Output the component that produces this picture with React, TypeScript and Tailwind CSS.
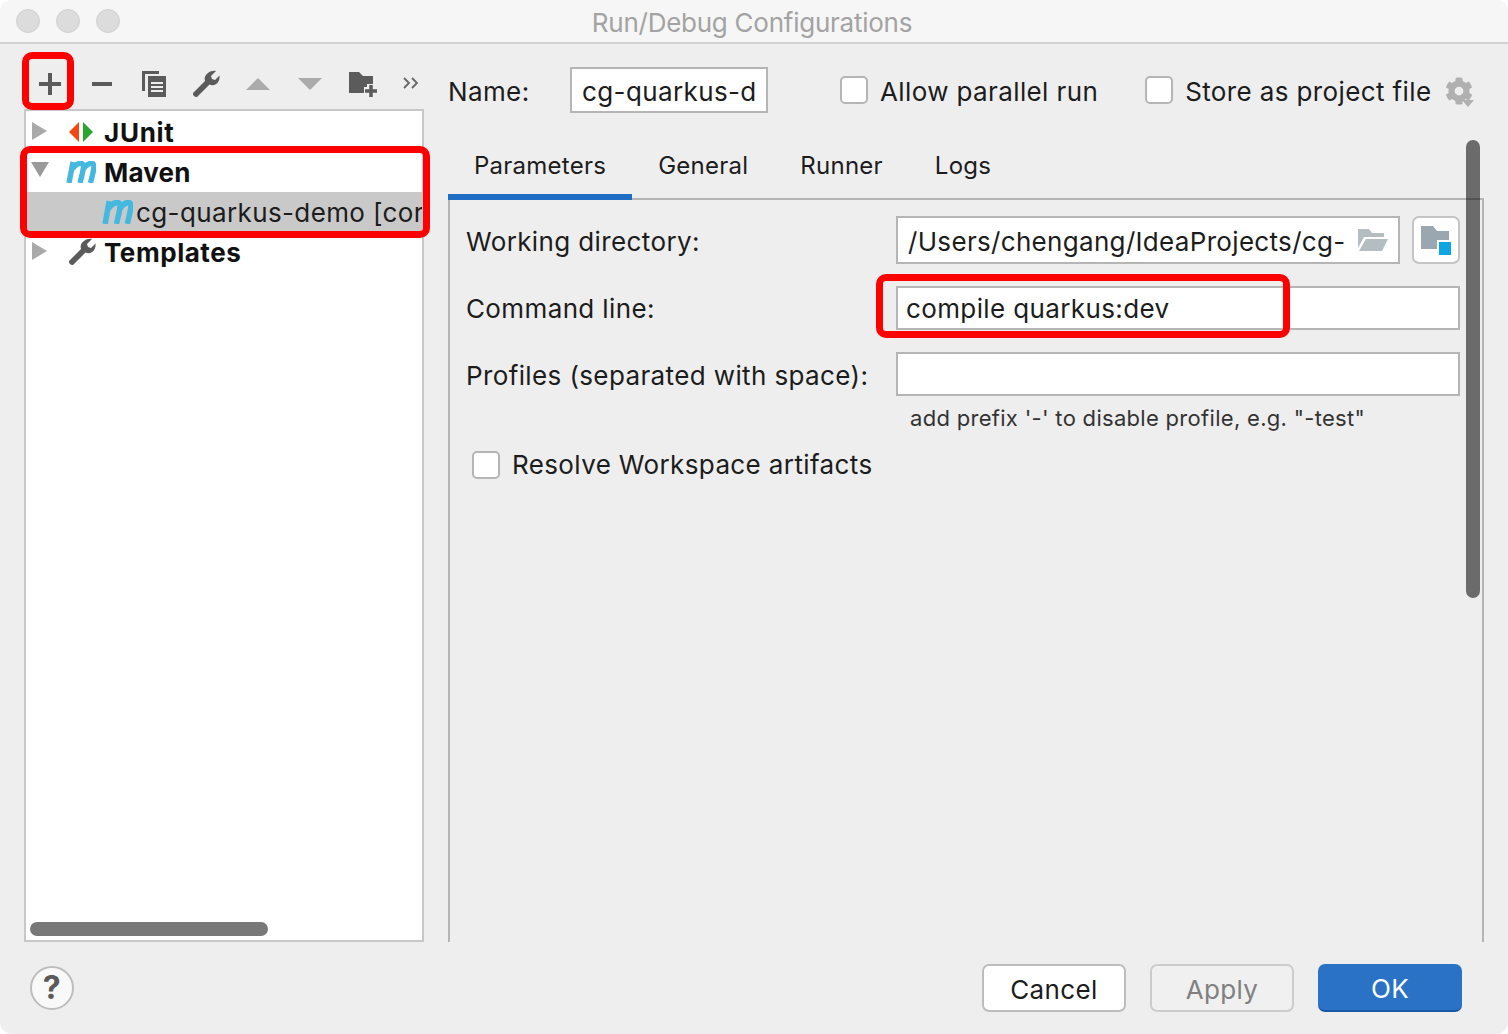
import React from 'react';
import { FaCog } from 'react-icons/fa';

const MavenIcon = ({ className }: { className: string }) => (
    <svg viewBox="0 0 30 22" preserveAspectRatio="none" className={className} fill="none" stroke="#45b8e0" strokeWidth="5.4">
        <path d="M3 22 L7 1" />
        <path d="M6.5 8 C9 3 15 1 17 3.5 C18 5 17.5 8 14 22" />
        <path d="M17.5 8 C20 3 26 1 27.5 3.5 C28.5 5 28 8 24.5 22" />
    </svg>
);

const WrenchIcon = () => (
    <svg viewBox="0 0 28 28" className="w-[28px] h-[28px]" fill="#5b5b5b">
        <path d="M24 1 L19 6 L20 9 L23 10 L27.5 5.5 C28 10 26 14 22 15 C20 15.5 18.5 15 17.5 14.5 L5.5 26.5 C4.5 27.5 3 27 2 26 C1 25 0.5 23.5 1.5 22.5 L13 11 C12 8 13 5 16 3 C18 1.5 21 0.5 24 1Z" />
    </svg>
);

const TreeRow = ({ children, selected }: { children: React.ReactNode; selected?: boolean }) => (
    <div className={`h-[40px] flex items-center whitespace-nowrap overflow-hidden ${selected ? 'bg-[#c9c9c9]' : ''}`}>
        {children}
    </div>
);

const RightArrow = () => (
    <svg viewBox="0 0 15 18" className="w-[15px] h-[18px] ml-[6px] mb-[2px]" fill="#a9a9a9">
        <polygon points="0,0 15,9 0,18" />
    </svg>
);

const Checkbox = ({ className }: { className?: string }) => (
    <div className={`w-[28px] h-[28px] rounded-[5px] bg-white border-2 border-[#b5b5b5] shrink-0 ${className ?? ''}`} />
);

const ToolSlot = ({ children }: { children: React.ReactNode }) => (
    <div className="w-[52px] shrink-0 flex justify-center">{children}</div>
);

const App = () => {
    return (
        <div className="relative w-[1508px] h-[1034px] bg-white overflow-hidden font-['Inter',sans-serif] text-[26px] tracking-[0.38px] text-[#1c1c1c]">
            <div className="h-full flex flex-col rounded-[12px] bg-[#eeeeee] overflow-hidden">
                {/* title bar */}
                <div className="h-[44px] shrink-0 grid grid-cols-[1fr_auto_1fr] items-center pl-[16px] pr-[20px] bg-[#f6f6f6] border-b-2 border-[#d2d2d2]">
                    <div className="flex gap-[16px]">
                        <div className="w-[24px] h-[24px] rounded-full bg-[#dcdcdc] border border-[#d0d0d0]" />
                        <div className="w-[24px] h-[24px] rounded-full bg-[#dcdcdc] border border-[#d0d0d0]" />
                        <div className="w-[24px] h-[24px] rounded-full bg-[#dcdcdc] border border-[#d0d0d0]" />
                    </div>
                    <div className="pt-[2px] text-[#a3a3a3] tracking-[-0.25px]">Run/Debug Configurations</div>
                    <div />
                </div>

                {/* main */}
                <div className="flex-1 flex min-h-0">
                    {/* left column */}
                    <div className="ml-[24px] w-[400px] shrink-0 flex flex-col">
                        <div className="h-[65px] shrink-0 flex items-center pt-[15px]">
                            <ToolSlot>
                                <svg viewBox="0 0 22 22" className="w-[22px] h-[22px]" fill="#5b5b5b">
                                    <rect x="9" y="0" width="4" height="22" />
                                    <rect x="0" y="9" width="22" height="4" />
                                </svg>
                            </ToolSlot>
                            <ToolSlot>
                                <div className="w-[20px] h-[4px] bg-[#5b5b5b]" />
                            </ToolSlot>
                            <ToolSlot>
                                <svg viewBox="0 0 24 26" className="w-[24px] h-[26px]" fill="#5b5b5b">
                                    <path d="M0 0H17V3H3V20H0Z" />
                                    <rect x="6" y="5" width="18" height="21" />
                                    <rect x="9" y="11" width="12" height="2" fill="#eeeeee" />
                                    <rect x="9" y="15" width="12" height="2" fill="#eeeeee" />
                                    <rect x="9" y="19" width="12" height="2" fill="#eeeeee" />
                                </svg>
                            </ToolSlot>
                            <ToolSlot>
                                <WrenchIcon />
                            </ToolSlot>
                            <ToolSlot>
                                <svg viewBox="0 0 24 12" className="w-[24px] h-[12px]" fill="#ababab">
                                    <polygon points="12,0 24,12 0,12" />
                                </svg>
                            </ToolSlot>
                            <ToolSlot>
                                <svg viewBox="0 0 24 12" className="w-[24px] h-[12px]" fill="#ababab">
                                    <polygon points="0,0 24,0 12,12" />
                                </svg>
                            </ToolSlot>
                            <div className="w-[54px] shrink-0 flex justify-center">
                                <svg viewBox="0 0 28 25" className="w-[28px] h-[25px]">
                                    <path d="M0 0H10L14 4H24V21H0Z" fill="#5b5b5b" />
                                    <path d="M22 12V25M15 19H28" stroke="#eeeeee" strokeWidth="8" />
                                    <path d="M22 13V25M16 19H28" stroke="#5b5b5b" strokeWidth="3.5" />
                                </svg>
                            </div>
                            <div className="w-[40px] shrink-0 flex justify-center">
                                <svg viewBox="0 0 15 12" className="w-[15px] h-[12px] mb-[2px]" fill="none" stroke="#666666" strokeWidth="1.8">
                                    <path d="M1 1 L6 6 L1 11" />
                                    <path d="M9 1 L14 6 L9 11" />
                                </svg>
                            </div>
                        </div>

                        <div className="relative flex-1 bg-white border-2 border-[#c8c8c8] pt-[1px] font-bold">
                            <TreeRow>
                                <RightArrow />
                                <svg viewBox="0 0 24 20" className="w-[24px] h-[20px] ml-[22px]">
                                    <polygon points="10,0 10,20 0,10" fill="#f04a12" />
                                    <polygon points="14,0 14,20 24,10" fill="#2aa52e" />
                                </svg>
                                <span className="ml-[11px] text-[#111111] tracking-[0.7px]">JUnit</span>
                            </TreeRow>
                            <TreeRow>
                                <svg viewBox="0 0 18 15" className="w-[18px] h-[15px] ml-[5px] mb-[6px]" fill="#9a9a9a">
                                    <polygon points="0,0 18,0 9,15" />
                                </svg>
                                <MavenIcon className="w-[30px] h-[22px] ml-[17px]" />
                                <span className="ml-[8px] text-[#111111] tracking-[0.2px]">Maven</span>
                            </TreeRow>
                            <TreeRow selected>
                                <MavenIcon className="w-[31px] h-[24px] ml-[76px] shrink-0" />
                                <span className="ml-[3px] font-normal">cg-quarkus-demo [cor</span>
                            </TreeRow>
                            <TreeRow>
                                <RightArrow />
                                <div className="ml-[21px]">
                                    <WrenchIcon />
                                </div>
                                <span className="ml-[8px] text-[#111111] tracking-[0.55px]">Templates</span>
                            </TreeRow>
                            <div className="absolute left-[4px] bottom-[4px] w-[238px] h-[14px] rounded-full bg-[#787878]" />
                        </div>
                    </div>

                    {/* right column */}
                    <div className="relative ml-[24px] w-[1036px] flex flex-col">
                        <div className="h-[96px] shrink-0 flex items-start pt-[23px]">
                            <div className="w-[122px] h-[46px] pt-[2px] flex items-center">Name:</div>
                            <div className="w-[198px] h-[46px] flex items-center pl-[10px] pt-[2px] bg-white border-2 border-[#b5b5b5] whitespace-nowrap">
                                cg-quarkus-d
                            </div>
                            <div className="h-[46px] flex items-center ml-[72px]">
                                <Checkbox />
                                <span className="ml-[12px] pt-[2px]">Allow parallel run</span>
                            </div>
                            <div className="h-[46px] flex items-center ml-[47px]">
                                <Checkbox />
                                <span className="ml-[12px] pt-[2px]">Store as project file</span>
                            </div>
                            <div className="relative ml-[14px] mt-[10px] text-[#b0b0b0]">
                                <FaCog size={28} />
                                <svg viewBox="0 0 12 7" className="absolute -right-[1px] -bottom-[2px] w-[12px] h-[7px]" fill="#b0b0b0">
                                    <polygon points="0,0 12,0 6,7" />
                                </svg>
                            </div>
                        </div>

                        <div className="h-[60px] shrink-0 flex border-b-2 border-[#b5b5b5] text-[24px] tracking-[0.25px]">
                            <div className="h-[60px] px-[26px] flex items-center pb-[2px] border-b-[6px] border-[#1f6dc4]">Parameters</div>
                            <div className="h-[58px] px-[26px] flex items-center pb-[6px]">General</div>
                            <div className="h-[58px] px-[26px] flex items-center pb-[6px]">Runner</div>
                            <div className="h-[58px] px-[26px] flex items-center pb-[6px]">Logs</div>
                        </div>

                        <div className="flex-1 flex flex-col border-l-2 border-r-2 border-[#b5b5b5] pt-[16px] pl-[16px] pr-[22px]">
                            <div className="flex">
                                <div className="w-[430px] h-[48px] pt-[2px] flex items-center shrink-0">Working directory:</div>
                                <div className="w-[504px] h-[48px] flex items-center pl-[10px] pr-[10px] bg-white border-2 border-[#b5b5b5] whitespace-nowrap">
                                    <span className="flex-1 pt-[2px] tracking-[0.32px]">/Users/chengang/IdeaProjects/cg-</span>
                                    <svg viewBox="0 0 30 22" className="w-[30px] h-[22px] shrink-0">
                                        <path d="M0 0H11L14 4H26V8H6L0 19Z" fill="#b4bec2" />
                                        <path d="M8 10H30L24 22H1Z" fill="#b4bec2" />
                                    </svg>
                                </div>
                                <div className="ml-[12px] w-[48px] h-[48px] flex items-center justify-center bg-white rounded-[7px] border-2 border-[#c4c4c4]">
                                    <svg viewBox="0 0 30 29" className="w-[30px] h-[29px]">
                                        <path d="M0 0H12L16 5H28V23H0Z" fill="#9aa7b0" />
                                        <rect x="16" y="14" width="14" height="15" fill="#ffffff" />
                                        <rect x="18" y="16" width="12" height="13" fill="#0ea5e0" />
                                    </svg>
                                </div>
                            </div>
                            <div className="flex mt-[22px]">
                                <div className="w-[430px] h-[44px] flex items-center shrink-0">Command line:</div>
                                <div className="flex-1 h-[44px] flex items-center pl-[8px] bg-white border-2 border-[#b5b5b5]">compile quarkus:dev</div>
                            </div>
                            <div className="flex mt-[22px]">
                                <div className="w-[430px] h-[44px] pt-[2px] flex items-center shrink-0">Profiles (separated with space):</div>
                                <div className="flex-1 h-[44px] bg-white border-2 border-[#b5b5b5]" />
                            </div>
                            <div className="ml-[444px] mt-[7px] text-[22px] tracking-[0.3px] leading-[30px] text-[#333333]">add prefix '-' to disable profile, e.g. "-test"</div>
                            <div className="flex items-center mt-[12px] ml-[6px]">
                                <Checkbox />
                                <span className="ml-[12px]">Resolve Workspace artifacts</span>
                            </div>
                        </div>

                        <div className="absolute left-[1018px] top-[96px] w-[14px] h-[458px] rounded-full bg-black/55" />
                    </div>
                </div>

                {/* footer */}
                <div className="h-[92px] shrink-0 flex items-start justify-between pt-[22px] pl-[30px] pr-[46px]">
                    <div className="mt-[2px] w-[44px] h-[44px] rounded-full bg-[#f9f9f9] border-2 border-[#bdbdbd] flex items-center justify-center font-bold text-[32px] text-[#5a5a5a]">?</div>
                    <div className="flex gap-[24px]">
                        <div className="w-[144px] h-[48px] pt-[2px] rounded-[7px] bg-white border-2 border-[#bdbdbd] flex items-center justify-center">Cancel</div>
                        <div className="w-[144px] h-[48px] pt-[2px] rounded-[7px] bg-[#f0f0f0] border-2 border-[#cccccc] flex items-center justify-center text-[#808080]">Apply</div>
                        <div className="w-[144px] h-[48px] pt-[2px] rounded-[7px] bg-[#2a72c6] border-b-2 border-[#1c57a5] flex items-center justify-center text-white">OK</div>
                    </div>
                </div>
            </div>

            {/* red annotations */}
            <div className="absolute left-[22px] top-[52px] w-[52px] h-[58px] border-[7px] border-[#fe0000] rounded-[10px]" />
            <div className="absolute left-[20px] top-[146px] w-[410px] h-[92px] border-[7px] border-[#fe0000] rounded-[10px]" />
            <div className="absolute left-[876px] top-[274px] w-[414px] h-[64px] border-[7px] border-[#fe0000] rounded-[10px]" />
        </div>
    );
};

export default App;
